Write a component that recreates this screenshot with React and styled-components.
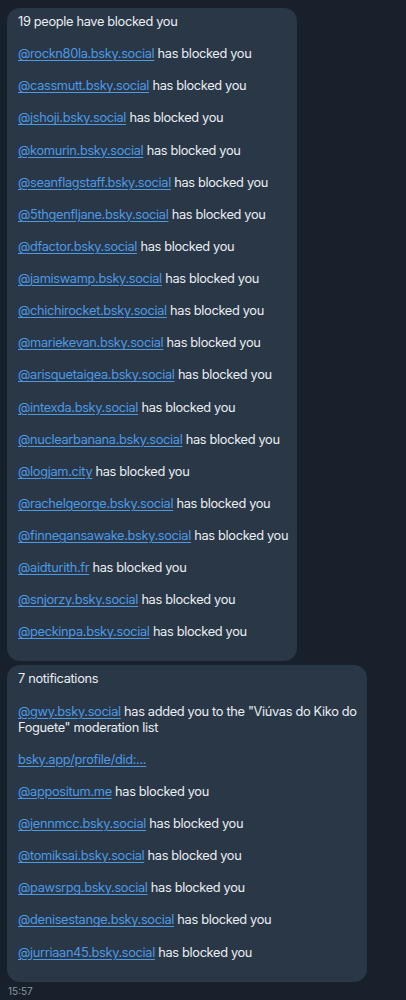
import React from "react";
import styled, { createGlobalStyle } from "styled-components";

const Global = createGlobalStyle`
  html, body { margin: 0; padding: 0; background: #18212b; }
  body { font-family: Inter, "Noto Sans", sans-serif; }
`;

const Page = styled.div`
  min-height: 1000px;
  background: #18212b;
  padding: 8px 0 0 7px;
  box-sizing: border-box;
  display: flex;
  flex-direction: column;
  align-items: flex-start;
  gap: 4px;
`;

const Bubble = styled.div`
  background: #2a3747;
  border-radius: 13px;
  padding: 6px 10px 21px 11px;
  box-sizing: border-box;
  color: #e9eef3;
  font-size: 12.8px;
  letter-spacing: -0.33px;
  line-height: 16.07px;
  width: ${(p) => (p.$width ? p.$width + "px" : "auto")};
  display: flex;
  flex-direction: column;
  gap: 16.07px;
`;

const Line = styled.div`
  white-space: ${(p) => (p.$wrap ? "normal" : "nowrap")};
`;

const Link = styled.a`
  color: #4a9ae6;
  text-decoration: underline;
  text-decoration-thickness: 1px;
  text-underline-offset: 2px;
`;

const Time = styled.div`
  color: #8b95a1;
  font-size: 10px;
  line-height: 12px;
  padding-left: 1px;
  margin-top: -1px;
`;

const first = [
  "rockn80la.bsky.social",
  "cassmutt.bsky.social",
  "jshoji.bsky.social",
  "komurin.bsky.social",
  "seanflagstaff.bsky.social",
  "5thgenfljane.bsky.social",
  "dfactor.bsky.social",
  "jamiswamp.bsky.social",
  "chichirocket.bsky.social",
  "mariekevan.bsky.social",
  "arisquetaigea.bsky.social",
  "intexda.bsky.social",
  "nuclearbanana.bsky.social",
  "logjam.city",
  "rachelgeorge.bsky.social",
  "finnegansawake.bsky.social",
  "aidturith.fr",
  "snjorzy.bsky.social",
  "peckinpa.bsky.social",
];

const second = [
  "appositum.me",
  "jennmcc.bsky.social",
  "tomiksai.bsky.social",
  "pawsrpg.bsky.social",
  "denisestange.bsky.social",
  "jurriaan45.bsky.social",
];

export default function App() {
  return (
    <>
      <Global />
      <Page>
        <Bubble $width={290}>
          <Line>19 people have blocked you</Line>
          {first.map((h) => (
            <Line key={h}>
              <Link>@{h}</Link> has blocked you
            </Line>
          ))}
        </Bubble>
        <Bubble $width={360}>
          <Line>7 notifications</Line>
          <Line $wrap>
            <Link>@gwy.bsky.social</Link> has added you to the "Viúvas do Kiko do
            Foguete" moderation list
          </Line>
          <Line>
            <Link>bsky.app/profile/did:...</Link>
          </Line>
          {second.map((h) => (
            <Line key={h}>
              <Link>@{h}</Link> has blocked you
            </Line>
          ))}
        </Bubble>
        <Time>15:57</Time>
      </Page>
    </>
  );
}
